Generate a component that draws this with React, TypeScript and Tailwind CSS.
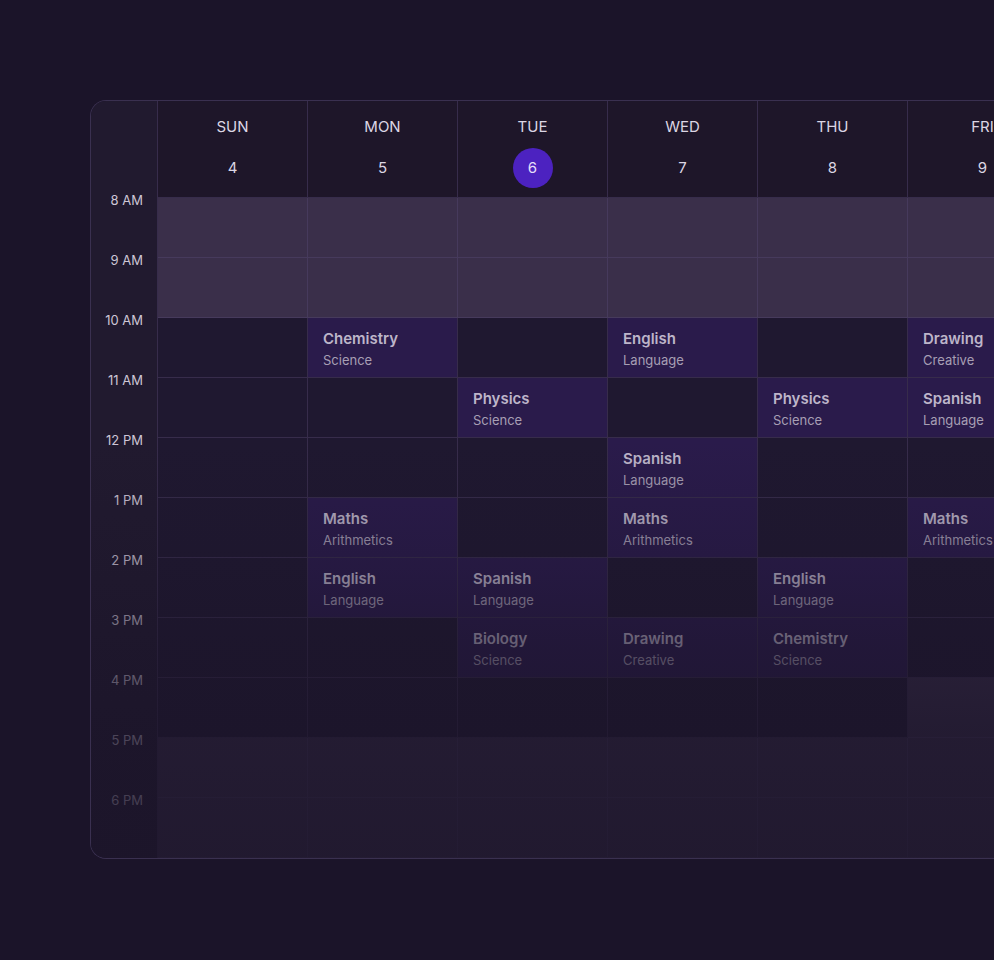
import React from 'react';

type Ev = { title: string; sub: string };

const days = [
  { name: 'SUN', date: 4 },
  { name: 'MON', date: 5 },
  { name: 'TUE', date: 6, today: true },
  { name: 'WED', date: 7 },
  { name: 'THU', date: 8 },
  { name: 'FRI', date: 9 },
  { name: 'SAT', date: 10 },
];

const hours = ['8 AM', '9 AM', '10 AM', '11 AM', '12 PM', '1 PM', '2 PM', '3 PM', '4 PM', '5 PM', '6 PM'];

const chem = { title: 'Chemistry', sub: 'Science' };
const phys = { title: 'Physics', sub: 'Science' };
const bio = { title: 'Biology', sub: 'Science' };
const eng = { title: 'English', sub: 'Language' };
const spa = { title: 'Spanish', sub: 'Language' };
const math = { title: 'Maths', sub: 'Arithmetics' };
const draw = { title: 'Drawing', sub: 'Creative' };

// schedule[hourIndex][dayIndex]
const schedule: Record<number, Record<number, Ev>> = {
  2: { 1: chem, 3: eng, 5: draw },
  3: { 2: phys, 4: phys, 5: spa },
  4: { 3: spa },
  5: { 1: math, 3: math, 5: math },
  6: { 1: eng, 2: spa, 4: eng },
  7: { 2: bio, 3: draw, 4: chem },
};

function isOffHours(h: number, d: number) {
  if (h <= 1 || h >= 9) return true;
  if (h === 8 && d >= 5) return true;
  return false;
}

function Cell({ h, d }: { h: number; d: number }) {
  const ev = schedule[h]?.[d];
  const off = isOffHours(h, d);
  const bg = ev ? 'bg-[#2a1b4b]' : off ? 'bg-[#3a2f4a]' : 'bg-[#1f1830]';
  const line = off ? 'border-[#463a5c]' : 'border-[#372c4b]';
  return (
    <div className={`h-[60px] border-b border-r ${line} ${bg} pl-[15px] pt-[11px]`}>
      {ev && (
        <>
          <div className="text-[15px] leading-5 font-semibold text-[#bdb5c9]">{ev.title}</div>
          <div className="mt-[2px] text-[13px] leading-[18px] text-[#a79fb4]">{ev.sub}</div>
        </>
      )}
    </div>
  );
}

export default function App() {
  return (
    <div
      className="w-full h-[960px] overflow-hidden bg-[#1b1429] pt-[100px] pl-[90px]"
      style={{ fontFamily: 'Inter, "Noto Sans", sans-serif' }}
    >
      <div className="relative flex w-max rounded-l-2xl border border-r-0 border-[#3a3050] overflow-hidden">
        {/* time column */}
        <div className="w-[67px] shrink-0 border-r border-[#372c4b] bg-[#211a2f]">
          <div className="h-[91px]" />
          {hours.map((h) => (
            <div key={h} className="h-[60px] pr-[14px] text-right text-[13px] leading-4 text-[#cdc6d6]">
              {h}
            </div>
          ))}
          <div className="h-[6px]" />
        </div>

        {/* day columns */}
        {days.map((day, d) => (
          <div key={day.name} className="w-[150px] shrink-0">
            <div className="h-[97px] border-b border-r border-[#372c4b] bg-[#1e1629] flex flex-col items-center pt-[16px]">
              <div className="text-[15px] leading-5 text-[#dcd6e4]">{day.name}</div>
              <div
                className={`mt-[11px] w-10 h-10 rounded-full flex items-center justify-center text-[15px] ${
                  day.today ? 'bg-[#4c22c0] text-[#e4defa]' : 'text-[#dcd6e4]'
                }`}
              >
                {day.date}
              </div>
            </div>
            {hours.map((_, h) => (
              <Cell key={h} h={h} d={d} />
            ))}
          </div>
        ))}

        {/* fade toward the bottom */}
        <div className="pointer-events-none absolute inset-0 bg-[linear-gradient(to_bottom,rgba(27,20,41,0)_0%,rgba(27,20,41,0)_45%,rgba(27,20,41,0.3)_62%,rgba(27,20,41,0.55)_72%,rgba(27,20,41,0.72)_83%,rgba(27,20,41,0.8)_100%)]" />
      </div>
    </div>
  );
}
